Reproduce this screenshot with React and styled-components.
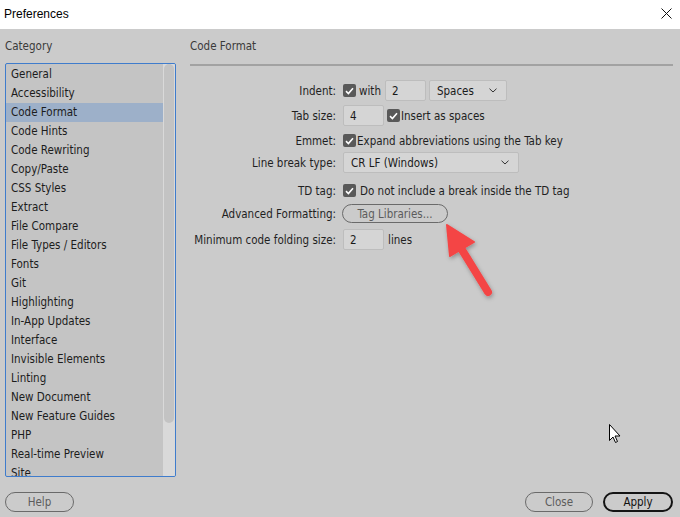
import React from "react";
import styled, { createGlobalStyle } from "styled-components";

const Global = createGlobalStyle`
  html, body { margin: 0; padding: 0; }
  body { background: #cbcbcb; font-family: "DejaVu Sans Condensed", "DejaVu Sans", sans-serif; font-size: 11px; color: #1e1e1e; }
`;

const Window = styled.div`
  width: 680px; height: 517px; display: flex; flex-direction: column; position: relative; overflow: hidden;
  background: #cbcbcb;
`;

const TitleBar = styled.div`
  height: 29px; background: #ffffff; display: flex; align-items: center; justify-content: space-between;
  padding: 0 8px 2px 4px; box-sizing: border-box;
  font-family: "Liberation Sans", Arial, sans-serif; font-size: 12px; color: #000;
`;

const Body = styled.div`
  flex: 1; display: flex; flex-direction: column; padding: 10px 7px 5px 5px;
`;

const Main = styled.div`
  display: grid; grid-template-columns: 171px 1fr; column-gap: 14px; flex: 1;
`;

const Column = styled.div`
  display: flex; flex-direction: column;
`;

const SectionLabel = styled.div`
  height: 14px; line-height: 14px; font-size: 11.5px; color: #3a3a3a; margin-bottom: 10px;
`;

const List = styled.div`
  height: 414px; border: 1px solid #3f7ccc; border-radius: 2px; background: #c4c4c4;
  display: flex; overflow: hidden; box-sizing: border-box;
`;

const Items = styled.div`
  flex: 1; display: flex; flex-direction: column; overflow: hidden; padding-top: 1px;
`;

const Item = styled.div`
  height: 19px; flex: none; line-height: 19px; padding-left: 5px; font-size: 11.5px; color: #1c1c1c;
  background: ${(p) => (p.$selected ? "#9db0c9" : "transparent")};
`;

const Track = styled.div`
  width: 12px; background: #d9d9d9; padding: 0 1px; box-sizing: border-box; flex: none;
`;

const Thumb = styled.div`
  height: 359px; background: #c3c3c3; border-radius: 5px;
`;

const Separator = styled.div`
  height: 2px; background: #a2a2a2; margin-top: 1px;
`;

const Form = styled.div`
  display: flex; flex-direction: column; padding-top: 14px;
`;

const Row = styled.div`
  display: grid; grid-template-columns: 146px 1fr; column-gap: 7px; align-items: center;
  height: 21px; margin-top: ${(p) => p.$gap || 0}px;
`;

const Label = styled.div`
  text-align: right; font-size: 11.5px; color: #1f1f1f; white-space: nowrap;
`;

const Controls = styled.div`
  display: flex; align-items: center; gap: ${(p) => p.$gap ?? 4}px; font-size: 11.5px; color: #1f1f1f; white-space: nowrap;
`;

const Field = styled.div`
  width: ${(p) => p.$w}px; height: 21px; box-sizing: border-box; background: #d5d5d5;
  border: 1px solid #bdbdbd; border-radius: 2px; display: flex; align-items: center; padding-left: 6px;
  font-size: 11.5px; color: #1a1a1a;
`;

const Select = styled(Field)`
  justify-content: space-between; padding: 0 9px 0 7px;
`;

const Box = styled.span`
  width: 13px; height: 13px; background: #595959; border-radius: 2px; display: inline-flex;
  align-items: center; justify-content: center; flex: none;
`;

const Word = styled.span`
  margin: 0 ${(p) => p.$right || 0}px 0 ${(p) => p.$left || 0}px;
`;

const PillButton = styled.div`
  width: ${(p) => p.$w}px; height: ${(p) => p.$h || 20}px; box-sizing: border-box; border-radius: 10px;
  border: ${(p) => (p.$strong ? "2px solid #141414" : "1px solid #6a6a6a")};
  color: ${(p) => (p.$strong ? "#111" : "#5c5c5c")};
  display: flex; align-items: center; justify-content: center; font-size: 11.5px; line-height: 14px;
  margin-left: ${(p) => p.$shift || 0}px;
`;

const Footer = styled.div`
  display: flex; justify-content: space-between; align-items: center; height: 20px;
`;

const FooterRight = styled.div`
  display: flex; gap: 10px;
`;

const Overlay = styled.svg`
  position: absolute; left: 0; top: 0; pointer-events: none;
`;

function Check() {
  return (
    <Box>
      <svg width="9" height="8" viewBox="0 0 9 8">
        <path d="M1 4.2 L3.4 6.5 L8 1.3" fill="none" stroke="#fff" strokeWidth="1.6" />
      </svg>
    </Box>
  );
}

function Chevron() {
  return (
    <svg width="8" height="5" viewBox="0 0 8 5">
      <path d="M0.5 0.7 L4 4 L7.5 0.7" fill="none" stroke="#333" strokeWidth="1" />
    </svg>
  );
}

const categories = [
  "General", "Accessibility", "Code Format", "Code Hints", "Code Rewriting", "Copy/Paste",
  "CSS Styles", "Extract", "File Compare", "File Types / Editors", "Fonts", "Git",
  "Highlighting", "In-App Updates", "Interface", "Invisible Elements", "Linting",
  "New Document", "New Feature Guides", "PHP", "Real-time Preview", "Site",
];

export default function App() {
  return (
    <>
      <Global />
      <Window>
        <TitleBar>
          <span>Preferences</span>
          <svg width="11" height="11" viewBox="0 0 11 11">
            <path d="M0.5 0.5 L10.5 10.5 M10.5 0.5 L0.5 10.5" stroke="#111" strokeWidth="1" />
          </svg>
        </TitleBar>
        <Body>
          <Main>
            <Column>
              <SectionLabel>Category</SectionLabel>
              <List>
                <Items>
                  {categories.map((c) => (
                    <Item key={c} $selected={c === "Code Format"}>{c}</Item>
                  ))}
                </Items>
                <Track>
                  <Thumb />
                </Track>
              </List>
            </Column>
            <Column>
              <SectionLabel>Code Format</SectionLabel>
              <Separator />
              <Form>
                <Row>
                  <Label>Indent:</Label>
                  <Controls $gap={3}>
                    <Check />
                    <Word $right={1}>with</Word>
                    <Field $w={41}>2</Field>
                    <Select $w={78}>Spaces<Chevron /></Select>
                  </Controls>
                </Row>
                <Row $gap={4}>
                  <Label>Tab size:</Label>
                  <Controls $gap={3}>
                    <Field $w={41}>4</Field>
                    <Check />
                    <Word $left={-2}>Insert as spaces</Word>
                  </Controls>
                </Row>
                <Row $gap={4}>
                  <Label>Emmet:</Label>
                  <Controls $gap={1}>
                    <Check />
                    <span>Expand abbreviations using the Tab key</span>
                  </Controls>
                </Row>
                <Row $gap={1}>
                  <Label>Line break type:</Label>
                  <Controls>
                    <Select $w={176}>CR LF (Windows)<Chevron /></Select>
                  </Controls>
                </Row>
                <Row $gap={7}>
                  <Label>TD tag:</Label>
                  <Controls $gap={4}>
                    <Check />
                    <span>Do not include a break inside the TD tag</span>
                  </Controls>
                </Row>
                <Row $gap={2}>
                  <Label>Advanced Formatting:</Label>
                  <Controls>
                    <PillButton $w={106} $h={19} $shift={-1}>Tag Libraries...</PillButton>
                  </Controls>
                </Row>
                <Row $gap={5}>
                  <Label>Minimum code folding size:</Label>
                  <Controls>
                    <Field $w={41}>2</Field>
                    <span>lines</span>
                  </Controls>
                </Row>
              </Form>
            </Column>
          </Main>
          <Footer>
            <PillButton $w={69}>Help</PillButton>
            <FooterRight>
              <PillButton $w={68}>Close</PillButton>
              <PillButton $w={70} $strong>Apply</PillButton>
            </FooterRight>
          </Footer>
        </Body>
        <Overlay width="680" height="517" viewBox="0 0 680 517">
          <defs>
            <filter id="sh" x="-50%" y="-50%" width="200%" height="200%">
              <feDropShadow dx="1" dy="2" stdDeviation="2" floodColor="#000" floodOpacity="0.3" />
            </filter>
          </defs>
          <g filter="url(#sh)">
            <line x1="488" y1="292" x2="459" y2="245" stroke="#f44545" strokeWidth="8" strokeLinecap="round" />
            <path d="M447 225 L474 242 L450 256 Z" fill="#f44545" stroke="#f44545" strokeWidth="2" strokeLinejoin="round" />
          </g>
          <path d="M609.5 424.5 L609.5 440.5 L613 437 L615.5 442.5 L617.5 441.5 L615 436 L620 436 Z"
            fill="#fff" stroke="#000" strokeWidth="1" strokeLinejoin="round" />
        </Overlay>
      </Window>
    </>
  );
}
